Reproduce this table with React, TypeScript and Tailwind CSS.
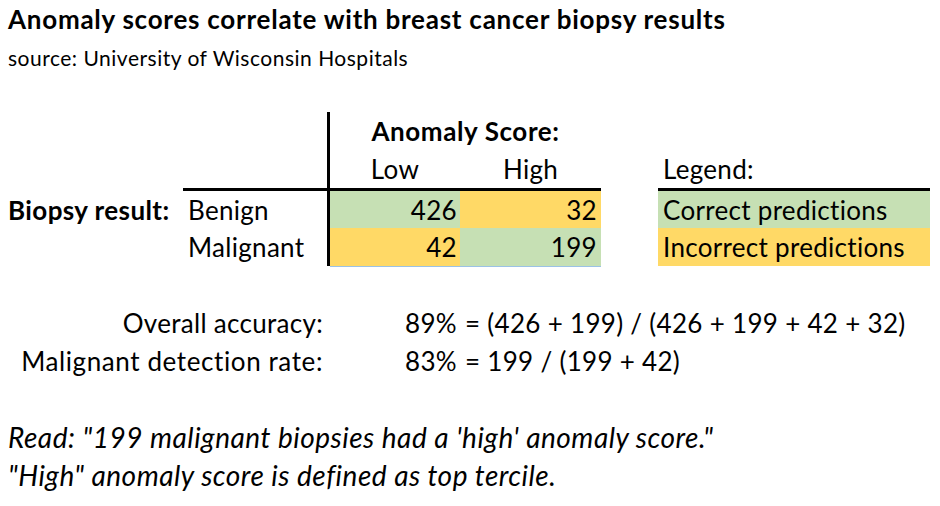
import React from 'react';

const GREEN = 'bg-[#c6e0b4]';
const YELLOW = 'bg-[#ffd966]';

const App: React.FC = () => {
    return (
        <div className="w-[940px] h-[506px] bg-white text-black font-['Lato',sans-serif] text-[26px] tracking-[0.3px] leading-none overflow-hidden">
            <div className="h-[38px] flex items-center pl-2 font-bold text-[26px] tracking-[0.75px]">
                Anomaly scores correlate with breast cancer biopsy results
            </div>
            <div className="h-[38px] flex items-center pl-2 text-[21px] tracking-[0.5px]">
                source: University of Wisconsin Hospitals
            </div>
            <div className="h-[36px]" />

            {/* crosstab + legend */}
            <div className="flex h-[38px]">
                <div className="w-[327px]" />
                <div className="w-[3px] bg-black" />
                <div className="w-[271px] flex items-center justify-center font-bold tracking-[0.6px]">Anomaly Score:</div>
            </div>
            <div className="flex h-[38px]">
                <div className="w-[327px]" />
                <div className="w-[3px] bg-black" />
                <div className="w-[130px] flex items-center justify-center">Low</div>
                <div className="w-[141px] flex items-center justify-center">High</div>
                <div className="w-[57px]" />
                <div className="w-[272px] flex items-center pl-[5px]">Legend:</div>
            </div>
            <div className="flex h-[3px]">
                <div className="w-[183px]" />
                <div className="w-[418px] bg-black" />
                <div className="w-[57px]" />
                <div className="w-[272px] bg-black" />
            </div>
            <div className="flex h-[37px]">
                <div className="w-[183px] flex items-center pl-2 font-bold tracking-[0.4px]">Biopsy result:</div>
                <div className="w-[144px] flex items-center pl-[5px]">Benign</div>
                <div className="w-[3px] bg-black" />
                <div className={`w-[130px] flex items-center justify-end pr-[3px] ${GREEN}`}>426</div>
                <div className={`w-[141px] flex items-center justify-end pr-[4px] ${YELLOW}`}>32</div>
                <div className="w-[57px]" />
                <div className={`w-[272px] flex items-center pl-[5px] ${GREEN}`}>Correct predictions</div>
            </div>
            <div className="flex h-[38px]">
                <div className="w-[183px]" />
                <div className="w-[144px] flex items-center pl-[5px]">Malignant</div>
                <div className="w-[3px] bg-black" />
                <div className={`w-[130px] flex items-center justify-end pr-[3px] ${YELLOW}`}>42</div>
                <div className={`w-[141px] flex items-center justify-end pr-[4px] ${GREEN}`}>199</div>
                <div className="w-[57px]" />
                <div className={`w-[272px] flex items-center pl-[5px] ${YELLOW}`}>Incorrect predictions</div>
            </div>
            <div className="flex h-[1px]">
                <div className="w-[330px]" />
                <div className="w-[271px] bg-[#9bc2e6]" />
            </div>
            <div className="h-[37px]" />

            {/* summary stats */}
            <div className="flex h-[38px]">
                <div className="w-[327px] flex items-center justify-end pr-[4px]">Overall accuracy:</div>
                <div className="w-[133px] flex items-center justify-end pr-[3px]">89%</div>
                <div className="flex items-center pl-[5px] whitespace-pre">= (426 + 199) / (426 + 199 + 42 + 32)</div>
            </div>
            <div className="flex h-[38px]">
                <div className="w-[327px] flex items-center justify-end pr-[4px] tracking-[0.6px]">Malignant detection rate:</div>
                <div className="w-[133px] flex items-center justify-end pr-[3px]">83%</div>
                <div className="flex items-center pl-[5px] whitespace-pre">= 199 / (199 + 42)</div>
            </div>
            <div className="h-[38px]" />

            {/* notes */}
            <div className="h-[38px] flex items-center pl-2 italic text-[28px] tracking-[0.5px]">
                Read: "199 malignant biopsies had a 'high' anomaly score."
            </div>
            <div className="h-[38px] flex items-center pl-2 italic text-[28px] tracking-[0.5px]">
                "High" anomaly score is defined as top tercile.
            </div>
        </div>
    );
};

export default App;
